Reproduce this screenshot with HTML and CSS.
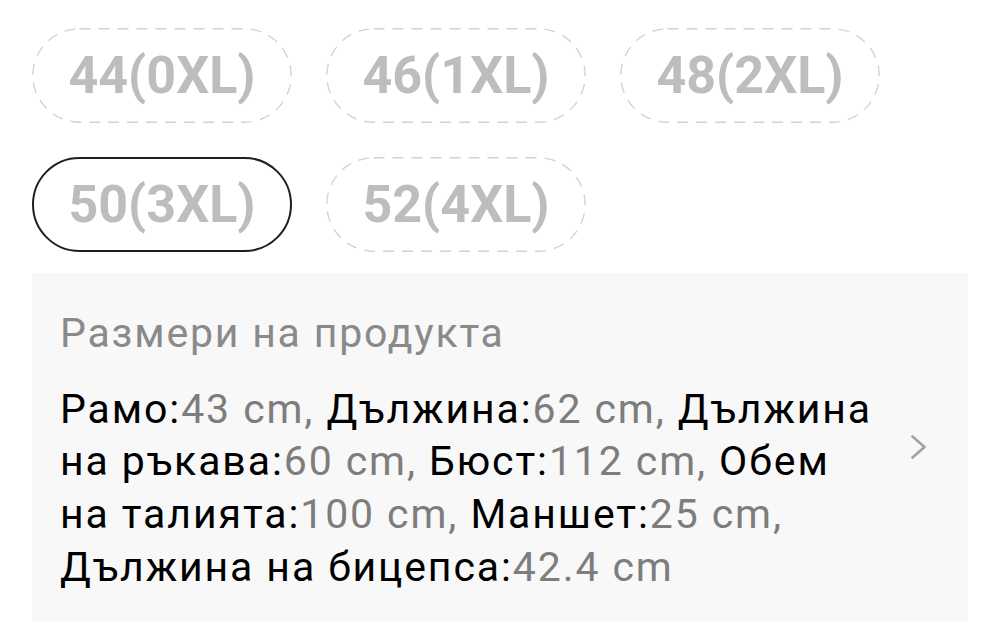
FILE: index.html
```html
<!DOCTYPE html>
<html lang="bg">
<head>
<meta charset="utf-8">
<link rel="stylesheet" href="styles.css">
</head>
<body>
<div class="page">
  <div class="chips">
    <div class="chip">44(0XL)</div>
    <div class="chip">46(1XL)</div>
    <div class="chip">48(2XL)</div>
    <div class="chip chip-selected">50(3XL)</div>
    <div class="chip">52(4XL)</div>
  </div>
  <div class="panel">
    <div class="panel-body">
      <div class="panel-title">Размери на продукта</div>
      <div class="specs">Рамо:<span class="val">43 cm, </span>Дължина:<span class="val">62 cm, </span>Дължина на ръкава:<span class="val">60 cm, </span>Бюст:<span class="val">112 cm, </span>Обем на талията:<span class="val">100 cm, </span>Маншет:<span class="val">25 cm, </span>Дължина на бицепса:<span class="val">42.4 cm</span></div>
    </div>
    <svg class="chevron" width="18" height="26" viewBox="0 0 18 26"><path d="M2.5 2.5 L14.5 13 L2.5 23.5" fill="none" stroke="#a3a3a3" stroke-width="2.8" stroke-linecap="round" stroke-linejoin="round"/></svg>
  </div>
</div>
</body>
</html>
```
FILE: styles.css
```css
* { box-sizing: border-box; }
html, body { margin: 0; padding: 0; background: #fff; }
body { font-family: Roboto, "Noto Sans", "Liberation Sans", sans-serif; }
.page { padding: 28px 32px 10px 32px; }
.chips {
  display: grid;
  grid-template-columns: repeat(3, 260px);
  column-gap: 34px;
  row-gap: 34px;
}
.chip {
  width: 260px;
  height: 95px;
  border-radius: 47.5px;
  background-image: url("data:image/svg+xml,%3Csvg xmlns='http://www.w3.org/2000/svg' width='260' height='95'%3E%3Crect x='0.75' y='0.75' width='258.5' height='93.5' rx='46.75' fill='none' stroke='%23d2d2d2' stroke-width='1.5' stroke-dasharray='11 8'/%3E%3C/svg%3E");
  display: flex;
  align-items: center;
  justify-content: center;
  font-weight: 700;
  font-size: 52px;
  color: #bdbdbd;
}
.chip-selected {
  background-image: none;
  border: 2.5px solid #1f1f1f;
}
.panel {
  margin-top: 21px;
  background: #f8f8f8;
  width: 936px;
  height: 348px;
  display: flex;
  align-items: center;
  padding: 0 40px 0 28px;
}
.panel-body {
  flex: 1;
  align-self: flex-start;
  padding-top: 36px;
}
.panel-title {
  font-size: 41px;
  letter-spacing: 1.8px;
  color: #8a8a8a;
  line-height: 48px;
  margin-bottom: 25.6px;
}
.specs {
  font-size: 41px;
  letter-spacing: 1.9px;
  line-height: 52.7px;
  color: #000;
  width: 820px;
}
.val { color: #7d7d7d; }
.chevron { flex: none; }
```
